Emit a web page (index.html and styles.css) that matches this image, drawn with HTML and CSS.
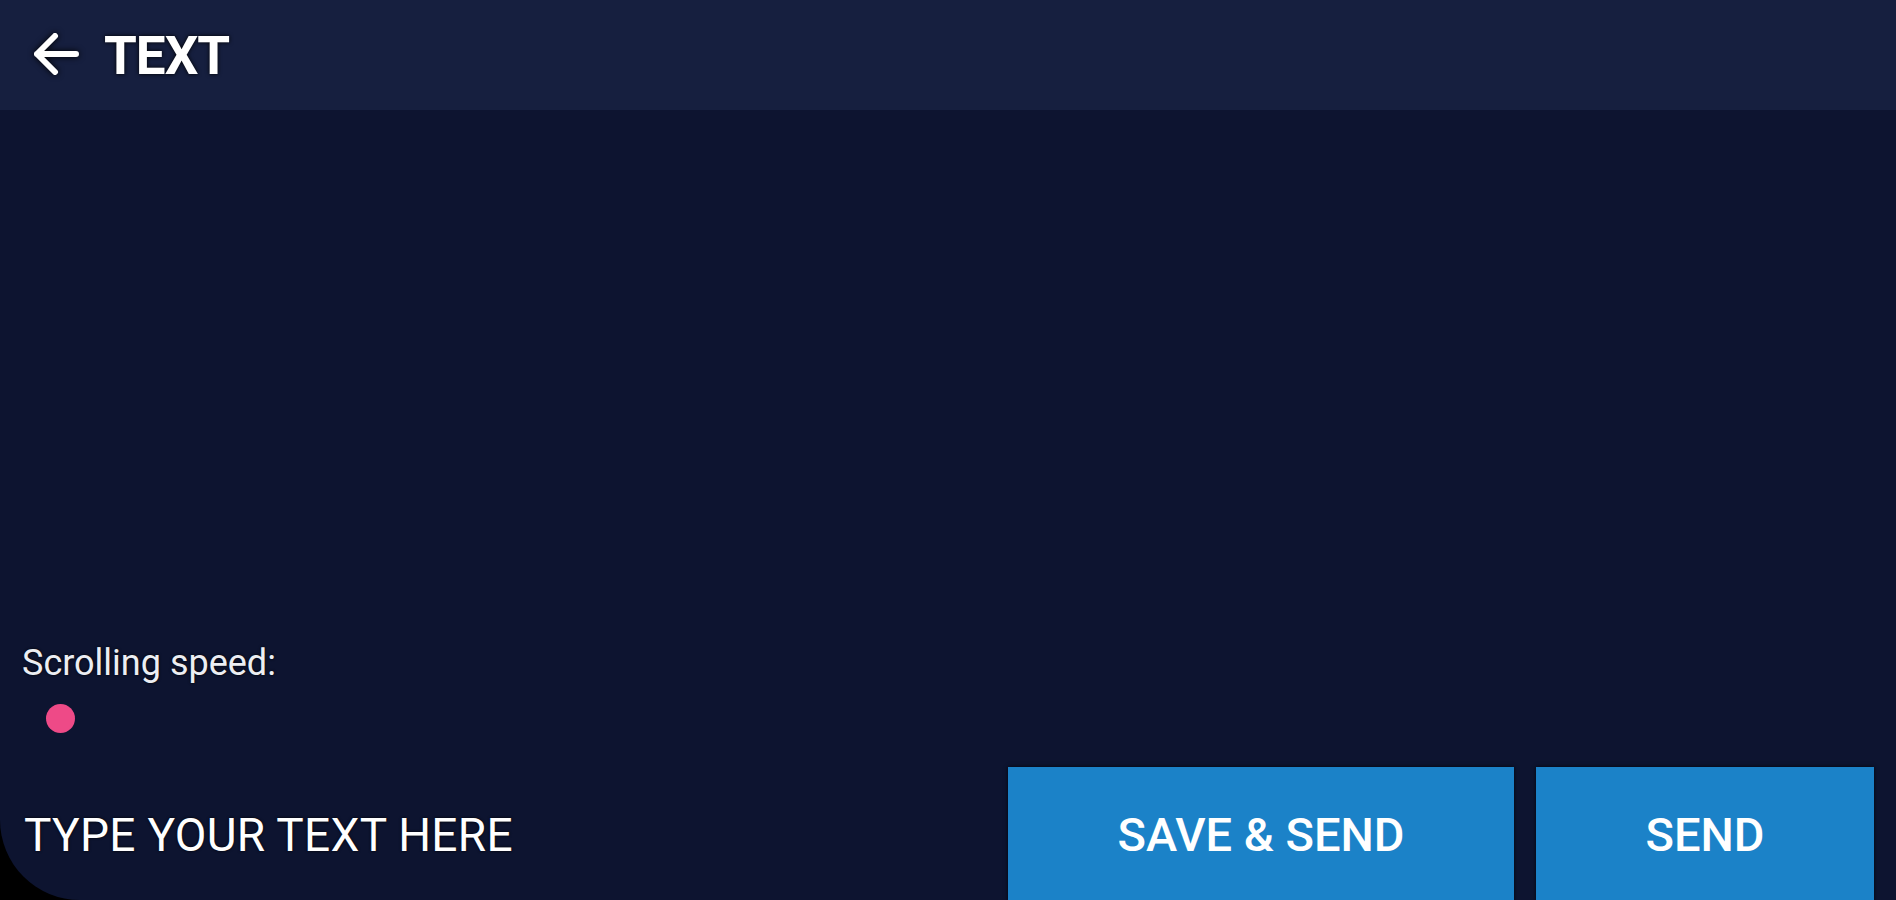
FILE: index.html
```html
<!DOCTYPE html>
<html lang="en">
<head>
  <meta charset="UTF-8" />
  <meta name="viewport" content="width=device-width, initial-scale=1.0"/>
  <title>Text</title>
  <link rel="stylesheet" href="styles.css">
</head>
<body>
  <div class="app">
    <header class="topbar">
      <button class="back" aria-label="Back">
        <svg width="54" height="54" viewBox="0 0 54 54">
          <path d="M48 26H9M27 8L9 26l18 18" fill="none" stroke="#fff" stroke-width="6" stroke-linecap="round" stroke-linejoin="round"/>
        </svg>
      </button>
      <h1>TEXT</h1>
    </header>

    <main class="content">
      <div class="speed">
        <p class="speed-label">Scrolling speed:</p>
        <span class="speed-dot"></span>
      </div>

      <div class="composer">
        <p class="placeholder">TYPE YOUR TEXT HERE</p>
        <button class="btn btn-wide">SAVE &amp; SEND</button>
        <button class="btn">SEND</button>
      </div>
    </main>
  </div>
</body>
</html>
```

FILE: styles.css
```css
html, body { margin: 0; padding: 0; height: 100%; background: #000; }
body { font-family: Roboto, "Noto Sans", sans-serif; color: #fff; overflow: hidden; }

.app {
  height: 900px;
  background: #0d1430;
  border-bottom-left-radius: 80px;
  display: flex;
  flex-direction: column;
  overflow: hidden;
}

/* Top bar */
.topbar {
  height: 110px;
  background: #161f3f;
  display: flex;
  align-items: center;
  padding-left: 28px;
  gap: 22px;
  flex-shrink: 0;
}
.back { background: none; border: 0; padding: 0; display: flex; filter: drop-shadow(0 0 3px #000); }
.topbar h1 {
  margin: 0;
  font-size: 53px;
  font-weight: 700;
  letter-spacing: -1px;
  text-shadow: 0 0 4px #000;
  padding-top: 2px;
}

/* Body */
.content { flex: 1; display: flex; flex-direction: column; justify-content: flex-end; }

.speed { padding-left: 22px; }
.speed-label {
  margin: 0;
  font-size: 36px;
  color: #eceef3;
  text-shadow: 0 0 3px #000;
}
.speed-dot {
  display: block;
  width: 29px;
  height: 29px;
  border-radius: 50%;
  background: #ee4a87;
  margin: 20px 0 0 24px;
}

.composer {
  display: flex;
  align-items: flex-start;
  gap: 22px;
  padding: 0 22px 0 24px;
  margin-top: 34px;
  height: 133px;
}
.placeholder {
  flex: 1;
  margin: 0;
  font-size: 46px;
  letter-spacing: 0.3px;
  line-height: 136px;
  text-shadow: 0 0 3px #000;
}
.btn {
  height: 135px;
  width: 338px;
  border: 0;
  background: #1b82c8;
  color: #fff;
  font-family: Roboto, sans-serif;
  font-size: 47px;
  font-weight: 500;
  box-shadow: 0 0 4px rgba(0, 0, 0, 0.8);
}
.btn-wide { width: 506px; }
```
